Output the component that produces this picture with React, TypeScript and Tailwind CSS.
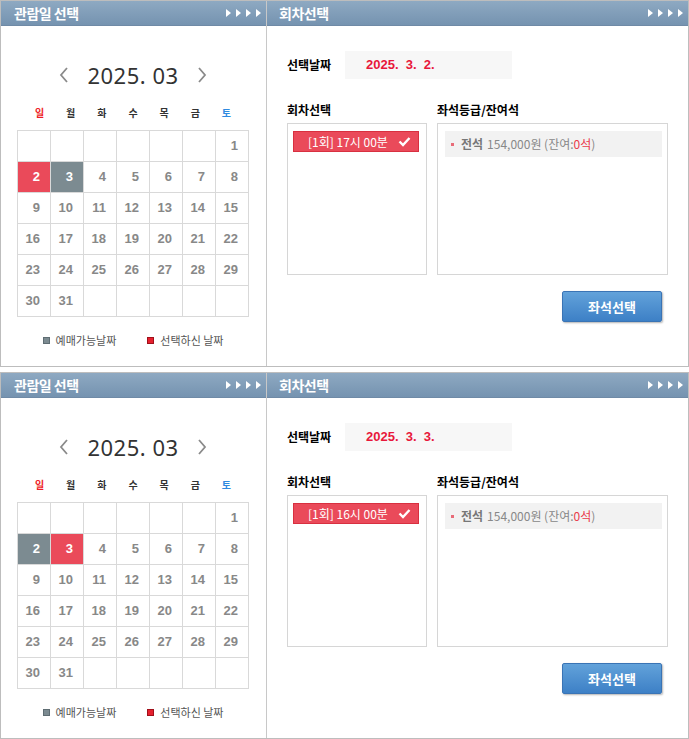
import React from 'react';

const KR = { fontFamily: '"Noto Sans CJK KR", "Noto Sans", sans-serif' };
const NUM = { fontFamily: '"Liberation Sans", Arial, "Noto Sans CJK KR", sans-serif' };

const Arrows = () => (
  <div className="flex items-center gap-[5px]">
    {[0, 1, 2, 3].map((i) => (
      <svg key={i} width="5" height="8" viewBox="0 0 5 8">
        <path d="M0 0 L5 4 L0 8 Z" fill="#ffffff" />
      </svg>
    ))}
  </div>
);

const Header = ({ title, className }: { title: string; className?: string }) => (
  <div
    className={`h-[25px] flex items-center justify-between bg-gradient-to-b from-[#8ea9c2] to-[#7593b0] border-b border-[#6f8aa6] pr-[5px] ${className ?? ''}`}
  >
    <span className="text-white text-[14px] font-bold tracking-[-0.5px]" style={KR}>
      {title}
    </span>
    <Arrows />
  </div>
);

type PanelProps = {
  selected: number;
  available: number;
  dateText: string;
  timeText: string;
};

const weekdays = ['일', '월', '화', '수', '목', '금', '토'];

const Calendar = ({ selected, available }: { selected: number; available: number }) => {
  // March 2025 starts on a Saturday
  const cells: (number | null)[] = [];
  for (let i = 0; i < 6; i++) cells.push(null);
  for (let d = 1; d <= 31; d++) cells.push(d);
  while (cells.length < 42) cells.push(null);

  return (
    <div className="flex flex-col items-center pr-[1px]">
      <div className="mt-[34px] h-[30px] flex items-center gap-[18px]">
        <svg width="10" height="16" viewBox="0 0 10 16">
          <path d="M8 1 L2 8 L8 15" stroke="#8a8a8a" strokeWidth="1.8" fill="none" />
        </svg>
        <span className="text-[22px] text-[#333] tracking-[0.5px]" style={{ fontFamily: '"Noto Sans", "DejaVu Sans", sans-serif' }}>
          2025. 03
        </span>
        <svg width="10" height="16" viewBox="0 0 10 16">
          <path d="M2 1 L8 8 L2 15" stroke="#8a8a8a" strokeWidth="1.8" fill="none" />
        </svg>
      </div>
      <div className="mt-[14px] w-[218px] grid grid-cols-7 h-[16px] items-center">
        {weekdays.map((w, i) => (
          <span
            key={w}
            className={`text-center text-[10px] font-bold ${i === 0 ? 'text-[#ee1c25]' : i === 6 ? 'text-[#2f8ae0]' : 'text-[#333]'}`}
            style={KR}
          >
            {w}
          </span>
        ))}
      </div>
      <div className="mt-[10px] grid grid-cols-[repeat(7,33px)] border-l border-t border-[#d9d9d9]">
        {cells.map((d, i) => {
          let bg = 'bg-white text-[#888]';
          if (d === selected) bg = 'bg-[#ea4a5a] text-white';
          else if (d === available) bg = 'bg-[#7c8b91] text-white';
          return (
            <div
              key={i}
              className={`h-[31px] border-r border-b border-[#d9d9d9] flex items-center justify-end pr-[10px] text-[13px] font-bold ${bg}`}
              style={NUM}
            >
              {d ?? ''}
            </div>
          );
        })}
      </div>
      <div className="mt-[15px] flex items-center gap-[31px] text-[11px] text-[#555]" style={KR}>
        <div className="flex items-center gap-[6px]">
          <span className="w-[7px] h-[7px] bg-[#7c8b91] border border-[#5f6d73]" />
          <span>예매가능날짜</span>
        </div>
        <div className="flex items-center gap-[6px]">
          <span className="w-[7px] h-[7px] bg-[#e5202e] border border-[#a0101a]" />
          <span>선택하신 날짜</span>
        </div>
      </div>
    </div>
  );
};

const Panel = ({ selected, available, dateText, timeText }: PanelProps) => (
  <div className="h-[367px] border border-[#bdbdbd] flex bg-white">
    <div className="w-[266px] border-r border-[#c8c8c8] flex flex-col">
      <Header title="관람일 선택" className="pl-[13px]" />
      <Calendar selected={selected} available={available} />
    </div>
    <div className="flex-1 flex flex-col">
      <Header title="회차선택" className="pl-[12px]" />
      <div className="pl-[20px] pr-[20px]">
        <div className="mt-[25px] flex items-center">
          <span className="w-[58px] text-[12px] font-bold text-black" style={KR}>
            선택날짜
          </span>
          <div className="w-[167px] h-[28px] bg-[#f7f7f7] flex items-center pl-[21px]">
            <span className="text-[13px] font-bold text-[#e8173b] whitespace-pre" style={NUM}>
              {dateText}
            </span>
          </div>
        </div>
        <div className="mt-[22px] flex gap-[10px]">
          <div className="w-[140px] flex flex-col">
            <span className="h-[16px] text-[12px] font-bold text-black" style={KR}>
              회차선택
            </span>
            <div className="mt-[6px] h-[152px] border border-[#d6d6d6] pt-[7px] pl-[5px]">
              <div className="w-[126px] h-[21px] bg-[#ea4a5a] border border-[#d83040] flex items-center justify-between pl-[14px] pr-[7px] text-white text-[12px]" style={KR}>
                <span>{timeText}</span>
                <svg width="13" height="11" viewBox="0 0 13 11">
                  <path d="M1.5 5.5 L5 9 L11.5 2" stroke="#ffffff" strokeWidth="2.4" fill="none" />
                </svg>
              </div>
            </div>
          </div>
          <div className="w-[231px] flex flex-col">
            <span className="h-[16px] text-[12px] font-bold text-black" style={KR}>
              좌석등급/잔여석
            </span>
            <div className="mt-[6px] h-[152px] border border-[#d6d6d6] pt-[7px] pl-[7px]">
              <div className="w-[217px] h-[26px] bg-[#f2f2f2] flex items-center pl-[6px] text-[12px] text-[#888]" style={KR}>
                <span className="w-[3px] h-[3px] bg-[#e86b78] mr-[7px]" />
                <span className="font-bold text-[#777] mr-[4px]">전석</span>
                <span>154,000원 (잔여:</span>
                <span className="text-[#ea3a4a]">0석</span>
                <span>)</span>
              </div>
            </div>
          </div>
        </div>
        <div className="mt-[16px] flex justify-end pr-[6px] w-[381px]">
          <button
            className="w-[100px] h-[31px] rounded-[2px] border border-[#3a74b5] bg-gradient-to-b from-[#62a2da] to-[#3d80c6] text-white text-[13px] font-bold shadow-[1px_1px_2px_rgba(0,0,0,0.3)]"
            style={KR}
          >
            좌석선택
          </button>
        </div>
      </div>
    </div>
  </div>
);

export default function App() {
  return (
    <div className="w-[689px] flex flex-col gap-[5px] bg-white">
      <Panel selected={2} available={3} dateText="2025.  3.  2." timeText="[1회] 17시 00분" />
      <Panel selected={3} available={2} dateText="2025.  3.  3." timeText="[1회] 16시 00분" />
    </div>
  );
}
